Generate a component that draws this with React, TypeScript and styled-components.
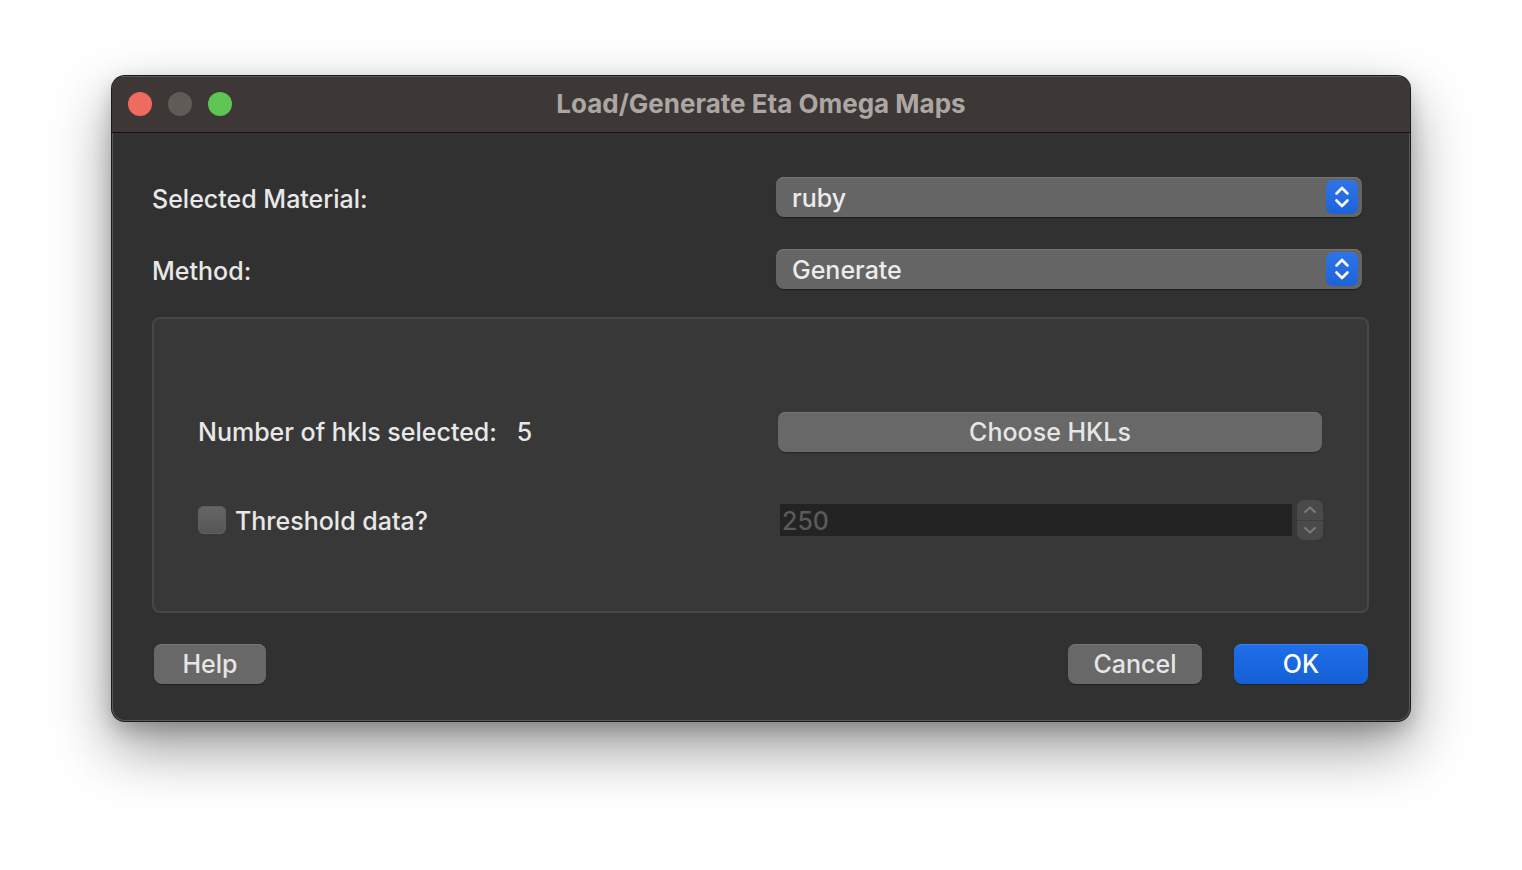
import React from "react";
import styled, { createGlobalStyle } from "styled-components";

const Global = createGlobalStyle`
  html, body { margin: 0; padding: 0; background: #ffffff; }
  body { font-family: Inter, "Noto Sans", "Liberation Sans", sans-serif; -webkit-font-smoothing: antialiased; }
`;

const Page = styled.div`
  width: 1522px;
  height: 870px;
  padding: 76px 0 0 112px;
  box-sizing: border-box;
  overflow: hidden;
`;

const Window = styled.div`
  width: 1298px;
  height: 645px;
  box-sizing: border-box;
  border-radius: 13px;
  overflow: hidden;
  background: #313131;
  display: flex;
  flex-direction: column;
  box-shadow: 0 0 0 1px #1a1a1a, inset 0 0 0 1px #5c5856, 0 26px 60px rgba(0, 0, 0, 0.42), 0 8px 20px rgba(0, 0, 0, 0.2);
`;

const TitleBar = styled.div`
  height: 56px;
  flex: none;
  background: #3d3735;
  border-bottom: 1px solid #121212;
  display: grid;
  grid-template-columns: 1fr auto 1fr;
  align-items: center;
  padding: 0 0 0 16px;
  box-shadow: inset 0 1px 0 #5c5856;
`;

const Lights = styled.div`
  display: flex;
  gap: 16px;
  align-items: center;
`;

const Light = styled.span<{ $c: string }>`
  width: 24px;
  height: 24px;
  border-radius: 50%;
  background: ${(p) => p.$c};
`;

const Title = styled.div`
  font-weight: 700;
  font-size: 26px;
  color: #aca7a4;
  margin: -2px 16px 0 0;
`;

const Body = styled.div`
  flex: 1;
  display: flex;
  flex-direction: column;
  padding: 44px 41px 0 40px;
`;

const FormRow = styled.div`
  display: flex;
  align-items: center;
  justify-content: space-between;
  height: 40px;
  padding-right: 7px;
  margin-bottom: 32px;
  &:nth-child(2) { margin-bottom: 28px; }
`;

const Label = styled.span<{ $shift?: number }>`
  font-size: 25px;
  font-weight: 500;
  color: #e8e8e8;
  padding-top: ${(p) => p.$shift ?? 0}px;
`;

const Combo = styled.div`
  width: 586px;
  height: 40px;
  box-sizing: border-box;
  border-radius: 8px;
  background: #656565;
  box-shadow: inset 0 1px 0 #767676, 0 1px 1px rgba(0, 0, 0, 0.4);
  display: flex;
  align-items: center;
  justify-content: space-between;
  padding: 2px 4px 0 16px;
  font-size: 25px;
  font-weight: 500;
  color: #ececec;
`;

const ComboArrow = styled.span`
  width: 32px;
  height: 34px;
  margin-top: -2px;
  border-radius: 7px;
  background: linear-gradient(#2f75ea, #1c62d8);
  display: flex;
  align-items: center;
  justify-content: center;
`;

const Group = styled.div`
  height: 296px;
  box-sizing: border-box;
  border: 2px solid #474747;
  border-radius: 8px;
  background: #383838;
  padding: 93px 45px 0 44px;
  display: grid;
  grid-template-columns: 580px 1fr;
  grid-template-rows: 39px 40px;
  align-items: center;
  align-content: start;
  row-gap: 49px;
  margin-bottom: 31px;
`;

const CheckLabel = styled.label`
  display: flex;
  align-items: center;
  gap: 9px;
  font-size: 25px;
  font-weight: 500;
  color: #e8e8e8;
  padding-top: 2px;
`;

const Box = styled.span`
  width: 28px;
  height: 28px;
  margin-top: -2px;
  border-radius: 6px;
  background: linear-gradient(#666, #555);
  box-shadow: inset 0 0 0 1px #5e5e5e;
`;

const PushButton = styled.button<{ $primary?: boolean; $w: number }>`
  width: ${(p) => p.$w}px;
  height: 40px;
  border: none;
  border-radius: 8px;
  font-family: inherit;
  font-size: 25px;
  font-weight: 500;
  color: ${(p) => (p.$primary ? "#ffffff" : "#e6e6e6")};
  background: ${(p) => (p.$primary ? "linear-gradient(#1f6ee8, #1560d6)" : "#686868")};
  box-shadow: ${(p) => (p.$primary ? "inset 0 1px 0 #3b82ef" : "inset 0 1px 0 #777")}, 0 1px 1px rgba(0, 0, 0, 0.35);
  padding: 0;
`;

const SpinRow = styled.div`
  display: flex;
  align-items: center;
  gap: 5px;
  padding-left: 2px;
`;

const SpinInput = styled.div`
  width: 512px;
  height: 32px;
  background: #232323;
  font-size: 25px;
  font-weight: 500;
  color: #5a5a5a;
  display: flex;
  align-items: center;
  padding: 2px 0 0 2px;
  box-sizing: border-box;
`;

const Spinner = styled.div`
  width: 26px;
  height: 40px;
  border-radius: 7px;
  background: #4a4a4a;
  display: flex;
  flex-direction: column;
  overflow: hidden;
`;

const SpinHalf = styled.span`
  flex: 1;
  display: flex;
  align-items: center;
  justify-content: center;
  & + & { border-top: 1px solid #3d3d3d; }
`;

const Footer = styled.div`
  display: flex;
  align-items: center;
  padding: 0 1px 0 2px;
  gap: 32px;
  & > :first-child { margin-right: auto; }
`;

const UpDown = () => (
  <svg width="18" height="26" viewBox="0 0 18 26" fill="none" stroke="#fff" strokeWidth="2.6" strokeLinecap="round" strokeLinejoin="round">
    <path d="M3.5 9.5 L9 4 L14.5 9.5" />
    <path d="M3.5 16.5 L9 22 L14.5 16.5" />
  </svg>
);

const Chev = ({ up }: { up?: boolean }) => (
  <svg width="14" height="10" viewBox="0 0 14 10" fill="none" stroke="#7a7a7a" strokeWidth="2.2" strokeLinecap="round" strokeLinejoin="round">
    {up ? <path d="M2 7 L7 2.5 L12 7" /> : <path d="M2 3 L7 7.5 L12 3" />}
  </svg>
);

export default function App() {
  return (
    <>
      <Global />
      <Page>
        <Window>
          <TitleBar>
            <Lights>
              <Light $c="#ef6a5f" />
              <Light $c="#615b58" />
              <Light $c="#5fc554" />
            </Lights>
            <Title>Load/Generate Eta Omega Maps</Title>
            <span />
          </TitleBar>
          <Body>
            <FormRow>
              <Label $shift={3}>Selected Material:</Label>
              <Combo>
                ruby
                <ComboArrow><UpDown /></ComboArrow>
              </Combo>
            </FormRow>
            <FormRow>
              <Label $shift={3}>Method:</Label>
              <Combo>
                Generate
                <ComboArrow><UpDown /></ComboArrow>
              </Combo>
            </FormRow>
            <Group>
              <Label>Number of hkls selected:&nbsp;&nbsp; 5</Label>
              <PushButton $w={544}>Choose HKLs</PushButton>
              <CheckLabel>
                <Box />
                Threshold data?
              </CheckLabel>
              <SpinRow>
                <SpinInput>250</SpinInput>
                <Spinner>
                  <SpinHalf><Chev up /></SpinHalf>
                  <SpinHalf><Chev /></SpinHalf>
                </Spinner>
              </SpinRow>
            </Group>
            <Footer>
              <PushButton $w={112}>Help</PushButton>
              <PushButton $w={134}>Cancel</PushButton>
              <PushButton $w={134} $primary>OK</PushButton>
            </Footer>
          </Body>
        </Window>
      </Page>
    </>
  );
}
